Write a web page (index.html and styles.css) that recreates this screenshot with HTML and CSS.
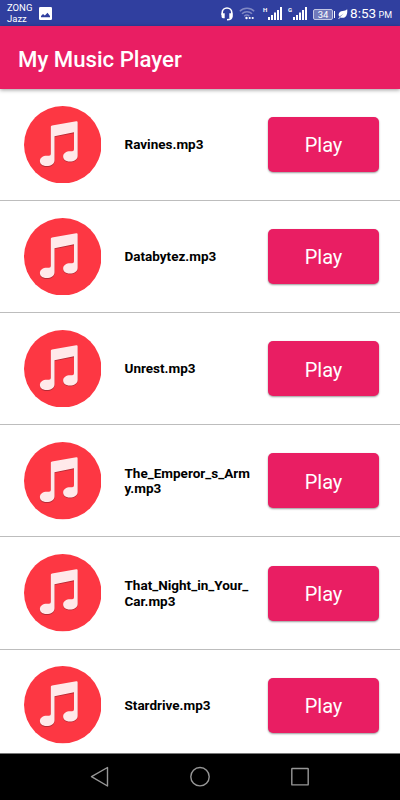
FILE: index.html
```html
<!DOCTYPE html>
<html lang="en">
<head>
    <meta charset="utf-8">
    <title>My Music Player</title>
    <link rel="stylesheet" href="styles.css">
</head>
<body>
    <svg class="defs" width="0" height="0">
        <symbol id="note" viewBox="0 0 78 78">
            <circle cx="39" cy="39" r="39" fill="#fd3743"/>
            <path transform="translate(0 .9)" fill="#b52b35" d="M28.2 19.5 52.6 15.4Q54 15.2 54 16.6V50C54 54 50.5 55.8 46 55.8C42 55.8 39.4 53.8 39.4 50.8C39.4 47.5 42.5 45.5 46.5 45.5H48.5Q50.3 45.5 50.3 43.8V26.4L30.7 30.4V54.6C30.7 58.5 27.2 60.4 22.6 60.4C18.6 60.4 16 58.4 16 55.4C16 52 19 50 23 50H25.2Q27 50 27 48.2V21Q27 19.7 28.2 19.5Z"/>
            <path fill="#ffe9ea" d="M28.2 19.5 52.6 15.4Q54 15.2 54 16.6V50C54 54 50.5 55.8 46 55.8C42 55.8 39.4 53.8 39.4 50.8C39.4 47.5 42.5 45.5 46.5 45.5H48.5Q50.3 45.5 50.3 43.8V26.4L30.7 30.4V54.6C30.7 58.5 27.2 60.4 22.6 60.4C18.6 60.4 16 58.4 16 55.4C16 52 19 50 23 50H25.2Q27 50 27 48.2V21Q27 19.7 28.2 19.5Z"/>
        </symbol>
        <symbol id="signal" viewBox="0 0 14 13">
            <path fill="#fff" d="M0 10h2v3H0zM3 8h2v5H3zM6 5.5h2V13H6zM9 3h2v10H9zM12 0h2v13h-2z"/>
        </symbol>
    </svg>

    <div class="status">
        <div class="carrier">ZONG<br>Jazz</div>
        <svg class="picture" width="13" height="13" viewBox="0 0 13 13">
            <rect width="13" height="13" rx="1.3" fill="#fff"/>
            <path fill="#303f9f" d="M2 10.3V9l2-2 1.8 1.6L8.5 5.8 11 9v1.3z"/>
        </svg>
        <div class="indicators">
            <svg class="headset" width="12" height="14" viewBox="0 0 12 14">
                <path fill="none" stroke="#fff" stroke-width="1.6" d="M1.2 8V5.8a4.8 4.8 0 0 1 9.6 0V9.5Q10.8 12.6 6 12.7"/>
                <path fill="#fff" d="M.5 6.2h3.2v5H2Q.5 11 .5 9.2zM8.3 6.2h3.2v3Q11.5 11 10 11.2H8.3z"/>
            </svg>
            <svg class="wifi" width="16" height="13" viewBox="0 0 16 13">
                <path fill="none" stroke="#8088c4" stroke-width="1.5" d="M.8 4.2a10.3 10.3 0 0 1 14.4 0M3 6.8a7 7 0 0 1 10 0M5.2 9.2a4 4 0 0 1 5.2 0"/>
                <circle cx="7.5" cy="11" r="1.2" fill="#fff"/>
                <circle cx="10.7" cy="11" r="1.1" fill="#fff"/>
                <circle cx="13.7" cy="11" r="1.1" fill="#fff"/>
            </svg>
            <span class="net">H</span>
            <svg class="bars" width="14" height="13"><use href="#signal"/></svg>
            <span class="net">G</span>
            <svg class="bars" width="14" height="13"><use href="#signal"/></svg>
            <span class="battery">34</span>
            <svg class="leaf" width="10" height="10" viewBox="0 0 10 10">
                <path fill="#fff" d="M9.2.2C9.6 4 8.8 8.6 4.8 8.8Q3.2 8.9 2.2 8.4L1 10 .2 9.4 5.8 4.4 1.2 7.8C-.6 4.2 2 2 4.8 1.9Q7.5 1.8 9.2.2z"/>
            </svg>
            <span class="time">8:53 <small>PM</small></span>
        </div>
    </div>

    <div class="toolbar">My Music Player</div>

    <div class="list">
        <div class="song">
            <svg class="cover"><use href="#note"/></svg>
            <div class="name">Ravines.mp3</div>
            <button>Play</button>
        </div>
        <div class="song">
            <svg class="cover"><use href="#note"/></svg>
            <div class="name">Databytez.mp3</div>
            <button>Play</button>
        </div>
        <div class="song">
            <svg class="cover"><use href="#note"/></svg>
            <div class="name">Unrest.mp3</div>
            <button>Play</button>
        </div>
        <div class="song">
            <svg class="cover"><use href="#note"/></svg>
            <div class="name">The_Emperor_s_Arm<br>y.mp3</div>
            <button>Play</button>
        </div>
        <div class="song">
            <svg class="cover"><use href="#note"/></svg>
            <div class="name">That_Night_in_Your_<br>Car.mp3</div>
            <button>Play</button>
        </div>
        <div class="song">
            <svg class="cover"><use href="#note"/></svg>
            <div class="name">Stardrive.mp3</div>
            <button>Play</button>
        </div>
    </div>

    <div class="navbar">
        <svg width="20" height="22" viewBox="0 0 20 22"><path d="M17.5 1.5V20l-16-9.3z"/></svg>
        <svg width="20" height="22" viewBox="0 0 20 22"><circle cx="10" cy="10.7" r="9.2"/></svg>
        <svg width="20" height="22" viewBox="0 0 20 22"><rect x="1.8" y="2.5" width="16.4" height="16.4" rx=".5"/></svg>
    </div>
</body>
</html>
```
FILE: styles.css
```css
* {
    box-sizing: border-box;
}
body {
    margin: 0;
    width: 400px;
    height: 800px;
    display: flex;
    flex-direction: column;
    overflow: hidden;
    background: #fff;
    font-family: Roboto, sans-serif;
}
svg {
    display: block;
    flex: none;
}
.defs {
    position: absolute;
}
.status {
    flex: none;
    height: 26px;
    padding: 2px 8px 0 7px;
    display: flex;
    align-items: flex-start;
    background: #303f9f;
    color: #fff;
}
.carrier {
    width: 32px;
    margin-top: 1px;
    font-size: 9.5px;
    line-height: 10.5px;
}
.picture {
    margin-top: 5px;
}
.indicators {
    height: 23px;
    margin-left: auto;
    display: flex;
    align-items: center;
}
.wifi {
    margin: 0 8px 0 6px;
}
.net {
    width: 5px;
    margin-top: -8px;
    font-size: 6px;
    font-weight: bold;
    line-height: 6px;
}
.bars {
    margin-right: 6px;
}
.battery {
    position: relative;
    width: 20px;
    height: 11px;
    margin: 1px 5px 0 0;
    border: 1px solid #c3c7e4;
    border-radius: 2px;
    background: #7079bb;
    font-size: 9.5px;
    line-height: 9px;
    text-align: center;
}
.battery::after {
    content: "";
    position: absolute;
    right: -3px;
    top: 1px;
    width: 1.5px;
    height: 7px;
    background: #fff;
}
.leaf {
    margin-right: 2px;
}
.time {
    margin-top: 1px;
    font-size: 13.5px;
    line-height: 16px;
    white-space: nowrap;
}
.time small {
    margin-left: -1px;
    font-size: 9px;
}
.toolbar {
    position: relative;
    flex: none;
    height: 62.7px;
    padding: 2px 18px 0;
    background: #e91e63;
    box-shadow: 0 1px 4px rgba(0, 0, 0, 0.4);
    color: #fff;
    font-size: 22.2px;
    font-weight: 500;
    line-height: 62px;
}
.list {
    flex: 1;
    min-height: 0;
    overflow: hidden;
}
.song {
    height: 112.2px;
    padding: 0 21px 0 23.5px;
    display: flex;
    align-items: center;
    border-bottom: 1px solid #bdbdbd;
}
.cover {
    width: 77.5px;
    height: 77.5px;
}
.name {
    flex: 1;
    margin-left: 23.5px;
    padding-top: 1px;
    color: #000;
    font-size: 13.5px;
    font-weight: bold;
    line-height: 15.5px;
    white-space: nowrap;
}
.song button {
    width: 111px;
    height: 55px;
    padding: 2px 0 0;
    border: none;
    border-radius: 5px;
    background: #e91e63;
    box-shadow: 0 1px 2px rgba(0, 0, 0, 0.4);
    color: #fff;
    font-family: inherit;
    font-size: 20px;
}
.navbar {
    flex: none;
    height: 47px;
    display: flex;
    justify-content: center;
    align-items: center;
    gap: 80px;
    border-top: 1px solid #777;
    background: #000;
}
.navbar svg {
    fill: none;
    stroke: #979797;
    stroke-width: 1.4;
    stroke-linejoin: round;
}
```
